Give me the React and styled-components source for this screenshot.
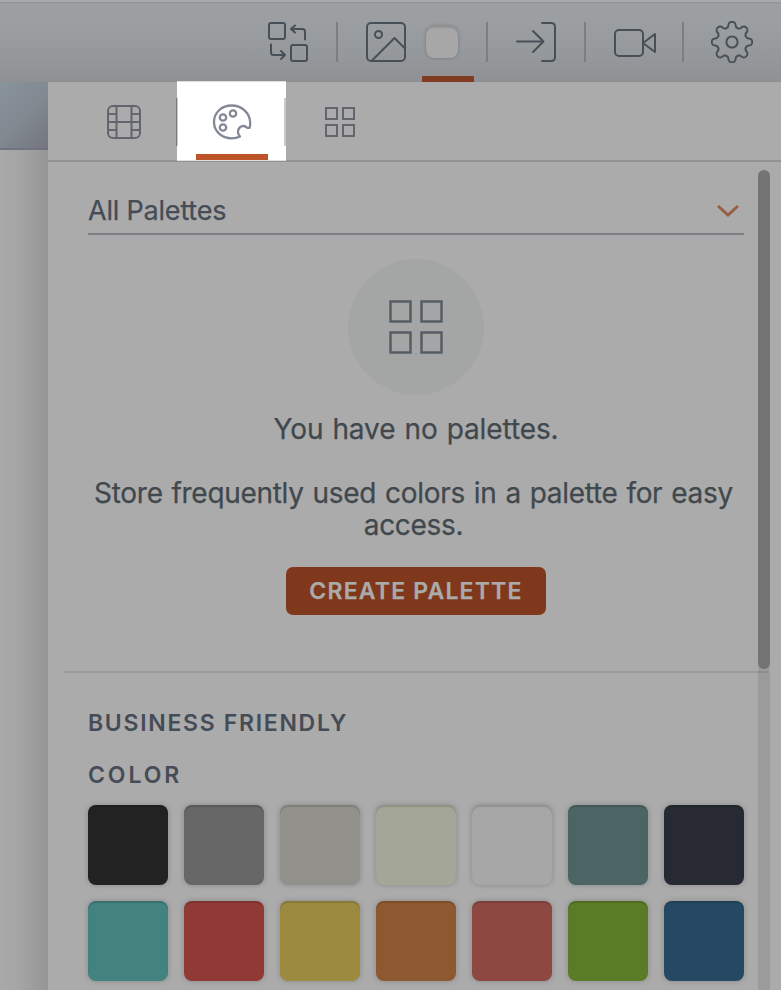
import React from "react";
import styled, { createGlobalStyle } from "styled-components";

const rows = [
  ["#222222", "#676767", "#92918c", "#a4a698", "#a7a7a7", "#4c6564", "#272a32"],
  ["#42827f", "#913935", "#9c8a3f", "#8e5930", "#8c4841", "#5b7c27", "#254962"],
];

function SwapIcon() {
  return (
    <Icon width="40" height="40" viewBox="0 0 40 40">
      <rect x="1" y="1" width="16" height="16" rx="2" />
      <rect x="23" y="23" width="16" height="16" rx="2" />
      <path d="M37 17.500V9.500Q37 7 34.500 7H23.500M27 3.500L23 7L27 10.500" />
      <path d="M3 22.500V30.500Q3 33 5.500 33H17M13 29L17 33L13 37" />
    </Icon>
  );
}

function ImageIcon() {
  return (
    <Icon width="40" height="40" viewBox="0 0 40 40">
      <rect x="1" y="1" width="38" height="38" rx="4" />
      <circle cx="12.500" cy="12.500" r="3.500" />
      <path d="M6 38.500L28.500 16L39 26.500" />
    </Icon>
  );
}

function EnterIcon() {
  return (
    <Icon width="40" height="40" viewBox="0 0 40 40">
      <path d="M1 19.500H27.500M17 9L27.500 19.500L17 30" />
      <path d="M26 1H35Q39 1 39 5V35Q39 39 35 39H26" />
    </Icon>
  );
}

function CameraIcon() {
  return (
    <Icon width="42" height="40" viewBox="0 0 42 40">
      <rect x="1" y="8" width="28" height="26" rx="4" />
      <path d="M41 12V30L29 21Z" />
    </Icon>
  );
}

// eight round teeth joined by round valleys
function gearPath() {
  const point = (deg) => {
    const a = (deg * Math.PI) / 180;
    // a point on the tangent between a tooth (r 16.6) and a valley (r 18.2)
    const r = 17.06;
    return `${(21 + r * Math.sin(a)).toFixed(2)} ${(21 - r * Math.cos(a)).toFixed(2)}`;
  };
  let d = `M${point(-12.2)}`;
  for (let i = 0; i < 8; i++) {
    d += `A3.6 3.6 0 0 1 ${point(i * 45 + 12.2)}`;
    d += `A3.4 3.4 0 0 0 ${point(i * 45 + 32.8)}`;
  }
  return d + "Z";
}

function GearIcon() {
  return (
    <Icon width="42" height="42" viewBox="0 0 42 42">
      <path d={gearPath()} />
      <circle cx="21" cy="21" r="5.600" />
    </Icon>
  );
}

function FilmIcon() {
  return (
    <TabIcon width="34" height="34" viewBox="0 0 34 34">
      <rect x="1" y="1" width="32" height="32" rx="5" />
      <path d="M9.500 1V33M24.500 1V33M1 17H33M1 9H9.500M1 25H9.500M24.500 9H33M24.500 25H33" />
    </TabIcon>
  );
}

function PaletteIcon() {
  return (
    <ActiveTabIcon width="40" height="36" viewBox="0 0 40 36">
      <path d="M37.500 23.800C38.100 21.900 38.400 19.700 38.100 17.500C37.300 8.300 29.500 1.500 19.800 1.500C9.500 1.500 2 8.600 2 18C2 27.300 9.700 34.300 19.800 34.300C22.800 34.300 25.500 33.700 28 32.500C26 30.200 25.400 27.400 26.700 24.900C28.400 21.600 32 21.300 34.500 23.200C35.500 23.900 36.500 24.100 37.500 23.800Z" />
      <circle cx="11" cy="13.500" r="3.200" />
      <circle cx="21" cy="9.500" r="3.200" />
      <circle cx="11" cy="23.500" r="3.200" />
    </ActiveTabIcon>
  );
}

function GridIcon() {
  return (
    <TabIcon width="30" height="30" viewBox="0 0 30 30">
      <rect x="1" y="1" width="11" height="11" />
      <rect x="18" y="1" width="11" height="11" />
      <rect x="1" y="18" width="11" height="11" />
      <rect x="18" y="18" width="11" height="11" />
    </TabIcon>
  );
}

function App() {
  return (
    <Page>
      <GlobalStyle />
      <Toolbar>
        <SwapIcon />
        <Separator />
        <ImageIcon />
        <ColorButton>
          <ColorChip />
        </ColorButton>
        <Separator />
        <EnterIcon />
        <Separator />
        <CameraIcon />
        <Separator $end />
        <GearIcon />
      </Toolbar>
      <Body>
        <Canvas>
          <CanvasHeader />
        </Canvas>
        <Panel>
          <Tabs>
            <Tab>
              <FilmIcon />
            </Tab>
            <ActiveTab>
              <PaletteIcon />
            </ActiveTab>
            <Tab>
              <GridIcon />
            </Tab>
          </Tabs>
          <Content>
            <Select>
              <span>All Palettes</span>
              <Chevron width="24" height="14" viewBox="0 0 24 14">
                <path d="M2 2L12 11L22 2" />
              </Chevron>
            </Select>
            <Empty>
              <Circle>
                <LargeGrid width="54" height="54" viewBox="0 0 54 54">
                  <rect x="1.500" y="1.500" width="20" height="20" />
                  <rect x="32.500" y="1.500" width="20" height="20" />
                  <rect x="1.500" y="32.500" width="20" height="20" />
                  <rect x="32.500" y="32.500" width="20" height="20" />
                </LargeGrid>
              </Circle>
              <Title>You have no palettes.</Title>
              <Message>
                Store frequently used colors in a palette for easy access.
              </Message>
              <Button>CREATE PALETTE</Button>
            </Empty>
            <Divider />
            <Heading $spacing="1.7px">BUSINESS FRIENDLY</Heading>
            <Heading $spacing="2.9px">COLOR</Heading>
            <Swatches>
              {rows.flat().map((color) => (
                <Swatch key={color} $color={color} />
              ))}
            </Swatches>
          </Content>
          <Scrollbar>
            <Thumb />
          </Scrollbar>
        </Panel>
      </Body>
    </Page>
  );
}

export default App;

const GlobalStyle = createGlobalStyle`
  * {
    box-sizing: border-box;
  }
  body {
    margin: 0;
    overflow: hidden;
    font-family: Inter, "Liberation Sans", sans-serif;
  }
`;

const Page = styled.div`
  width: 781px;
  height: 990px;
  overflow: hidden;
  display: flex;
  flex-direction: column;
  background: #ababab;
`;

const Toolbar = styled.div`
  height: 82px;
  flex: none;
  display: flex;
  align-items: center;
  padding-left: 268px;
  border-top: 2px solid #a9a9a9;
  background: linear-gradient(#8e9295 0, #9b9fa2 2px, #9b9fa2 20px, #96999c 50px, #8f9093 100%);
`;

const Icon = styled.svg`
  flex: none;
  fill: none;
  stroke: #485057;
  stroke-width: 2;
  stroke-linecap: round;
  stroke-linejoin: round;
`;

const Separator = styled.div`
  width: 2px;
  height: 40px;
  flex: none;
  margin: 0 ${({ $end }) => ($end ? "27px" : "28px")} 0 ${({ $end }) => ($end ? "26px" : "28px")};
  background: #7c7f82;
`;

const ColorButton = styled.div`
  position: relative;
  width: 52px;
  height: 80px;
  flex: none;
  padding: 24px 0 0 20px;

  &::after {
    content: "";
    position: absolute;
    left: 16px;
    bottom: 0;
    width: 52px;
    height: 6px;
    background: #803c20;
  }
`;

const ColorChip = styled.div`
  width: 32px;
  height: 32px;
  border-radius: 8px;
  background: #a7a7a7;
  box-shadow: 0 0 3px 1px rgba(0, 0, 0, 0.14), inset 0 2px 1px rgba(0, 0, 0, 0.11);
`;

const Body = styled.div`
  flex: 1;
  display: flex;
`;

const Canvas = styled.div`
  width: 48px;
  flex: none;
  background: linear-gradient(90deg, #a9a9a9 0, #a5a5a5 40%, #959595 100%);
`;

const CanvasHeader = styled.div`
  height: 68px;
  border-bottom: 2px solid #70757d;
  background: linear-gradient(135deg, #89939b 0%, #818991 50%, #74767f 100%);
`;

const Panel = styled.div`
  position: relative;
  flex: 1;
  background: #ababab;
`;

const Tabs = styled.div`
  height: 80px;
  display: flex;
  padding-left: 22px;
  border-bottom: 2px solid #8f9396;
`;

const Tab = styled.div`
  width: 108px;
  height: 78px;
  display: flex;
  align-items: center;
  justify-content: center;
  padding-top: 2px;
`;

const ActiveTab = styled(Tab)`
  position: relative;
  width: 109px;
  height: 80px;
  margin: -1px 0 0 -1px;
  padding: 2px 0 0 0;
  background: #ffffff;
  border-top: 1px solid #dcdfe1;
  border-bottom: 1px solid #dcdfe1;

  &::before {
    content: "";
    position: absolute;
    top: 16px;
    left: -1px;
    right: 0;
    height: 48px;
    border-left: 1px solid #77797f;
    border-right: 2px solid #c8c9d1;
    box-shadow: inset 1px 0 #c8c9d1;
  }

  &::after {
    content: "";
    position: absolute;
    left: 19px;
    bottom: 0;
    width: 72px;
    height: 6px;
    background: #bc5427;
  }
`;

const TabIcon = styled.svg`
  fill: none;
  stroke: #62656c;
  stroke-width: 2;
`;

const ActiveTabIcon = styled(TabIcon)`
  stroke: #848896;
  stroke-width: 2.3;
  stroke-linejoin: round;
`;

const Content = styled.div`
  padding: 26px 37px 0 40px;
`;

const Select = styled.div`
  height: 47px;
  display: flex;
  justify-content: space-between;
  padding: 7px 4px 0 0;
  border-bottom: 2px solid #7e7f84;
  color: #454c56;
  font-size: 27px;
  line-height: 32px;
  letter-spacing: -0.2px;
  -webkit-text-stroke: 0.25px;
`;

const Chevron = styled.svg`
  margin-top: 9px;
  fill: none;
  stroke: #985c42;
  stroke-width: 2.8;
`;

const Empty = styled.div`
  display: flex;
  flex-direction: column;
  align-items: center;
  padding: 24px 0 56px;
  color: #41484d;
  font-size: 28px;
  line-height: 32px;
  text-align: center;
  -webkit-text-stroke: 0.25px;
`;

const Circle = styled.div`
  width: 136px;
  height: 136px;
  display: flex;
  align-items: center;
  justify-content: center;
  border-radius: 50%;
  background: #a3a6a5;
`;

const LargeGrid = styled.svg`
  fill: none;
  stroke: #565e65;
  stroke-width: 2.5;
`;

const Title = styled.div`
  margin-top: 18px;
  letter-spacing: -0.1px;
  word-spacing: 1.3px;
`;

const Message = styled.div`
  width: 680px;
  margin: 32px -12px 0;
  padding: 0 15px 0 10px;
  letter-spacing: -0.3px;
  word-spacing: 1.3px;
`;

const Button = styled.button`
  width: 260px;
  height: 48px;
  margin-top: 26px;
  padding: 0;
  border: 0;
  border-radius: 7px;
  background: #80381c;
  color: #ababab;
  font: 600 23px Inter, sans-serif;
  letter-spacing: 1.2px;
`;

const Divider = styled.div`
  height: 2px;
  margin: 0 -24px 34px;
  background: #9b9b9b;
`;

const Heading = styled.div`
  height: 32px;
  margin-bottom: 20px;
  color: #454c56;
  font-size: 23px;
  font-weight: 600;
  line-height: 32px;
  letter-spacing: ${({ $spacing }) => $spacing};
`;

const Swatches = styled.div`
  display: grid;
  grid-template-columns: repeat(7, 80px);
  gap: 16px;
  margin-top: -6px;
`;

const Swatch = styled.div`
  height: 80px;
  border-radius: 8px;
  background: ${({ $color }) => $color};
  box-shadow: 0 0 4px 1px rgba(0, 0, 0, 0.15), inset 0 2px 1px rgba(0, 0, 0, 0.13);
`;

const Scrollbar = styled.div`
  position: absolute;
  top: 88px;
  right: 11px;
  bottom: 0;
  width: 12px;
  border-radius: 6px 6px 0 0;
  background: rgba(0, 0, 0, 0.09);
`;

const Thumb = styled.div`
  height: 499px;
  border-radius: 6px;
  background: #747476;
`;
